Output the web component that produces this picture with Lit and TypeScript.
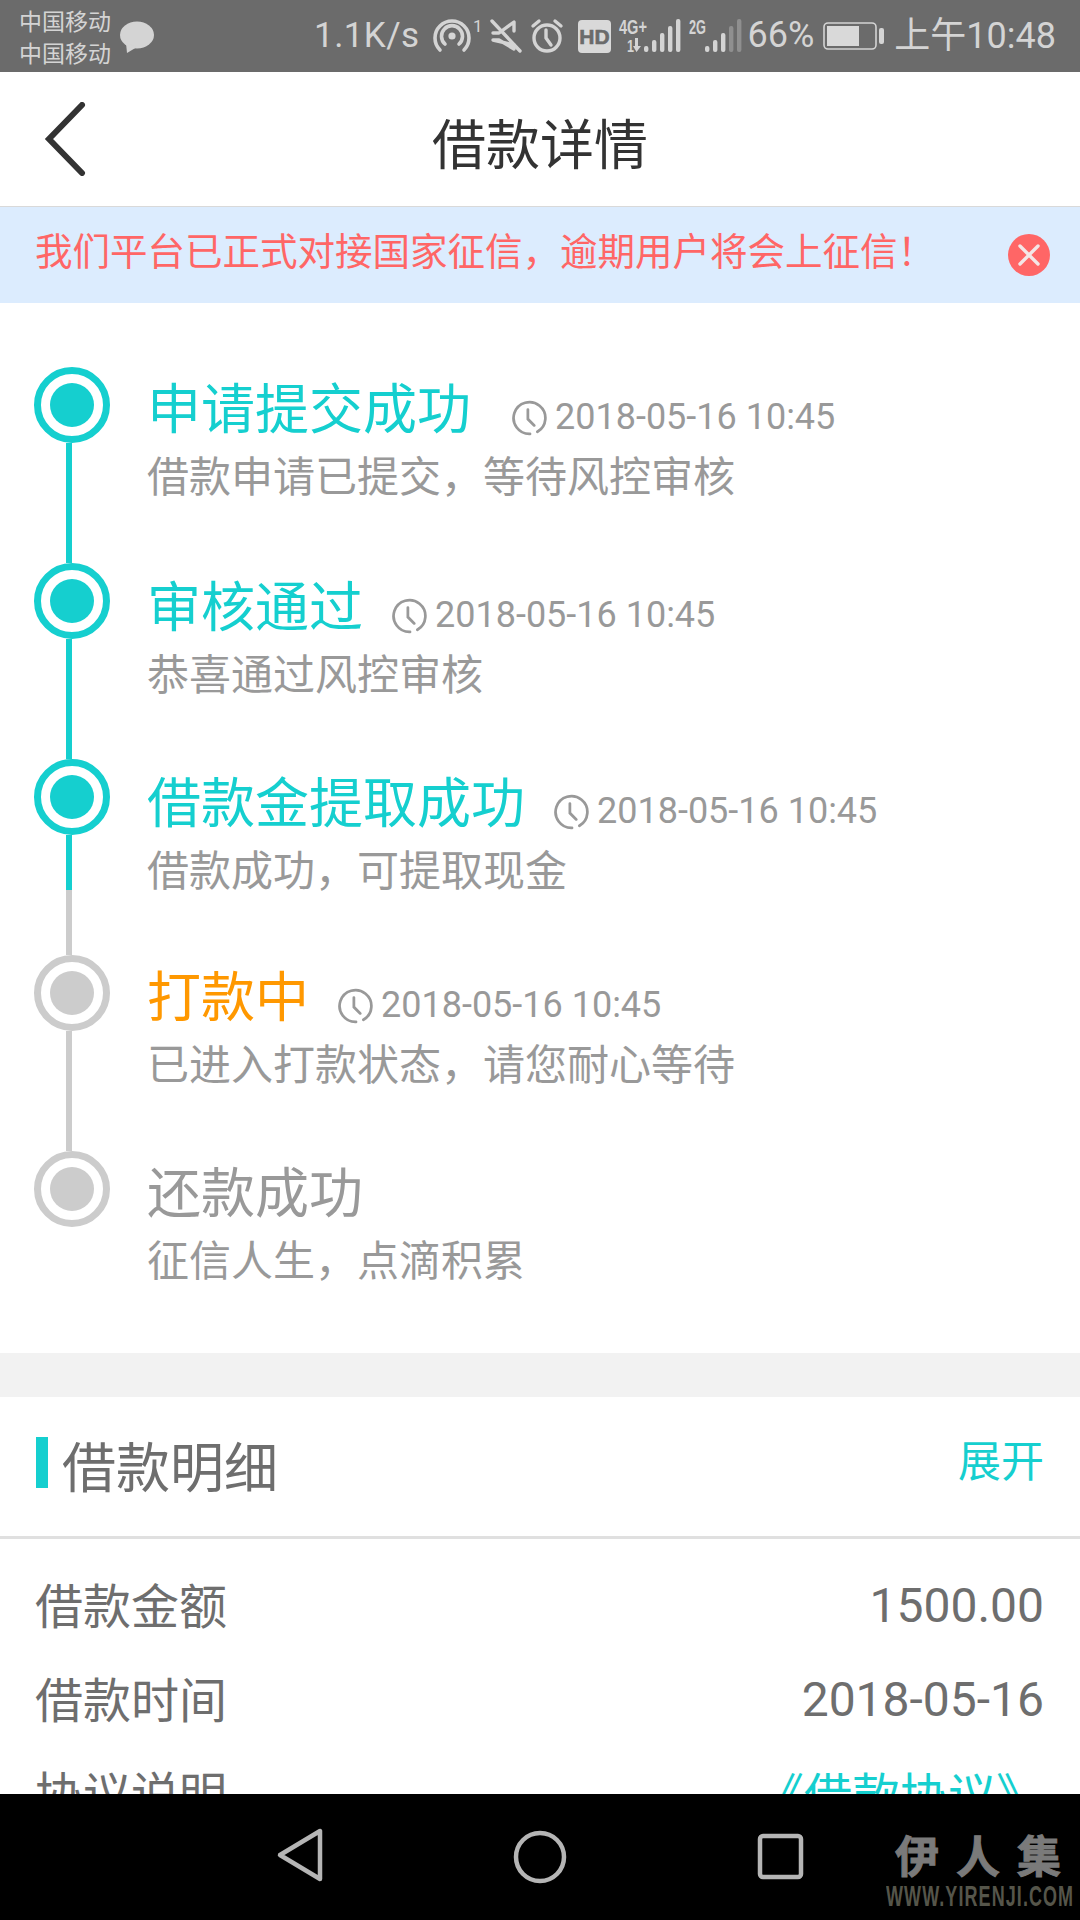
import { LitElement, html, css, svg } from "lit";
import { customElement } from "lit/decorators.js";

type Step = { state: string; title: string; time?: string; sub: string; wide?: boolean; low?: boolean; rail: string };

const STEPS: Step[] = [
  { state: "done", title: "申请提交成功", time: "2018-05-16 10:45", sub: "借款申请已提交，等待风控审核", wide: true, rail: "done" },
  { state: "done", title: "审核通过", time: "2018-05-16 10:45", sub: "恭喜通过风控审核", low: true, rail: "done" },
  { state: "done", title: "借款金提取成功", time: "2018-05-16 10:45", sub: "借款成功，可提取现金", low: true, rail: "split" },
  { state: "active", title: "打款中", time: "2018-05-16 10:45", sub: "已进入打款状态，请您耐心等待", rail: "todo" },
  { state: "todo", title: "还款成功", sub: "征信人生，点滴积累", rail: "none" },
];

const bars = (x0: number, dim: number) =>
  [[46, 0], [40, 1], [33, 2], [26, 3], [19, 4]].map(
    ([top, i]) =>
      svg`<rect x=${x0 + i * 8} y=${top - 19} width="4.4" height=${52 - top} rx="2" fill=${i >= 5 - dim ? "#8f8f8f" : "#d4d4d4"}></rect>`
  );

@customElement("app-root")
export class AppRoot extends LitElement {
  static styles = css`
    :host {
      display: block;
      width: 1080px;
      height: 1920px;
      overflow: hidden;
      background: #fff;
      font-family: "Noto Sans CJK SC", "Noto Sans", sans-serif;
    }
    .page { display: flex; flex-direction: column; height: 1920px; }

    .status {
      flex: none; height: 72px; background: #6b6b6b; color: #d4d4d4;
      display: flex; align-items: center; padding: 0 24px 0 19px; box-sizing: border-box;
    }
    .carrier { font-size: 23px; line-height: 32px; width: 101px; margin-top: 0; }
    .bubble { display: block; margin-top: 2px; }
    .status-right { margin-left: auto; display: flex; align-items: center; font-family: Roboto, sans-serif; }
    .speed { font-size: 35px; line-height: 40px; margin-right: 14px; letter-spacing: .4px; }
    .pct { font-size: 36px; line-height: 40px; margin-left: 7px; margin-top: -2px; }
    .clock-txt { font-size: 36px; line-height: 40px; margin-left: 10px; font-family: Roboto, "Noto Sans CJK SC", sans-serif; }
    .ic { display: block; flex: none; overflow: visible; }
    .m8 { margin-left: 8px; } .m9 { margin-left: 9px; } .m10 { margin-left: 10px; } .m15 { margin-left: 15px; }
    .sb-text { font-family: "Liberation Sans", sans-serif; font-weight: 700; fill: #d4d4d4; }

    .nav {
      flex: none; height: 134px; border-bottom: 1px solid #d9d9d9; position: relative;
      display: flex; align-items: center; justify-content: center;
    }
    .back { position: absolute; left: 44px; top: 30px; }
    .nav-title { font-size: 54px; color: #333; line-height: 60px; margin-top: 6px; }

    .banner {
      flex: none; height: 96px; background: #dcecfe; display: flex; align-items: center;
      justify-content: space-between; padding: 0 30px 0 35px; box-sizing: border-box;
    }
    .banner-text { font-size: 37.5px; line-height: 44px; color: #ff6666; margin-top: -12px; white-space: nowrap; }

    .main { flex: 1; min-height: 0; overflow: hidden; }
    .timeline { padding: 64px 0 0 34px; height: 1050px; box-sizing: border-box; }
    .step { display: flex; height: 196px; }
    .marker { width: 76px; flex: none; display: flex; flex-direction: column; }
    .dot {
      flex: none; width: 76px; height: 76px; box-sizing: border-box; border-radius: 50%;
      border: 7px solid; padding: 9px; position: relative; z-index: 1; background: #fff;
    }
    .dot i { display: block; width: 100%; height: 100%; border-radius: 50%; }
    .done .dot { border-color: #15cfcf; } .done .dot i { background: #15cfcf; }
    .active .dot, .todo .dot { border-color: #cccccc; }
    .active .dot i, .todo .dot i { background: #cccccc; }
    .rail { flex: 1; width: 6px; margin-left: 32px; display: flex; flex-direction: column; }
    .rail i { display: block; }
    .rail .t { background: #15cfcf; }
    .rail .g { background: #cccccc; flex: 1; }
    .rail .t.full { flex: 1; }
    .rail .t.part { height: 55px; }

    .body { margin-left: 37px; padding-top: 9px; }
    .body.low { padding-top: 11px; }
    .head { display: flex; align-items: center; height: 60px; }
    .title { font-size: 54px; line-height: 60px; white-space: nowrap; }
    .done .title { color: #15cfcf; }
    .active .title { color: #ff9800; }
    .todo .title { color: #999; }
    .time { display: flex; align-items: center; color: #999; font: 36px/40px Roboto, sans-serif; margin-left: 29px; padding-top: 21px; }
    .time.wide { margin-left: 41px; }
    .time svg { margin-right: 7px; margin-top: 3px; }
    .sub { font-size: 42px; line-height: 50px; color: #999; margin-top: 13px; white-space: nowrap; }

    .gap { height: 44px; background: #f2f2f2; }
    .sec-head {
      height: 139px; display: flex; align-items: center; padding: 0 36px; border-bottom: 3px solid #e0e0e0;
    }
    .bar { width: 12px; height: 51px; background: #15cfcf; margin-top: -8px; }
    .sec-title { font-size: 54px; color: #6e6e6e; margin-left: 14px; line-height: 60px; margin-top: -4px; }
    .expand { margin-left: auto; font-size: 43px; color: #15cfcf; line-height: 50px; margin-top: -18px; }
    .rows { padding: 19px 36px 0; }
    .row { height: 94px; display: flex; justify-content: space-between; align-items: center; font-size: 48px; color: #6e6e6e; }
    .lbl { margin-top: -4px; margin-left: -1px; }
    .val { font-family: Roboto, sans-serif; }
    .link { color: #15cfcf; font-size: 48px; margin-top: -2px; }

    .bottom {
      flex: none; height: 126px; background: #000; position: relative;
      display: flex; align-items: center; justify-content: center;
    }
    .bottom svg { position: absolute; left: 0; top: 0; }
    .mark { position: absolute; left: 886px; top: 38px; width: 190px; color: #7a7a7a; }
    .mark-cn { font-size: 44px; font-weight: 700; line-height: 44px; letter-spacing: 17px; margin-left: 9px; white-space: nowrap; -webkit-text-stroke: 1px #7a7a7a; }
    .mark-en {
      font: 700 30px/28px "Liberation Sans", sans-serif; color: #55554a;
      letter-spacing: 1.8px; margin-top: 6px; white-space: nowrap;
      width: 315px; transform: scaleX(.6); transform-origin: left center;
    }
  `;

  private statusBar() {
    return html`<div class="status">
      <div class="carrier">中国移动<br />中国移动</div>
      <svg class="ic bubble" width="34" height="32" viewBox="0 0 34 32">
        <ellipse cx="17" cy="14" rx="17" ry="13.5" fill="#d4d4d4"></ellipse>
        <path d="M6 22 L7 32 L17 26Z" fill="#d4d4d4"></path>
      </svg>
      <div class="status-right">
        <span class="speed">1.1K/s</span>
        <svg class="ic" width="48" height="34" viewBox="0 0 48 34" fill="none" stroke="#d4d4d4" stroke-width="3.6" stroke-linecap="round">
          <circle cx="18" cy="17" r="3.6" fill="#d4d4d4" stroke="none"></circle>
          <path d="M11 25a10.500 10.500 0 1 1 14 0"></path>
          <path d="M6 31a17 17 0 1 1 24 0"></path>
          <text x="39" y="13" font-size="17" fill="#d4d4d4" stroke="none" font-family="Roboto">1</text>
        </svg>
        <svg class="ic m8" width="32" height="34" viewBox="0 0 32 34" fill="none" stroke="#d4d4d4" stroke-width="3.4" stroke-linejoin="round" stroke-linecap="round">
          <path d="M2 2 L30 32"></path>
          <path d="M3 14 H9 L24 3 V12 M24 26 V30 L9 21 H3 Z"></path>
        </svg>
        <svg class="ic m9" width="32" height="34" viewBox="0 0 32 34" fill="none" stroke="#d4d4d4" stroke-width="3.4" stroke-linecap="round" stroke-linejoin="round">
          <circle cx="16" cy="19" r="13"></circle>
          <path d="M15 11 V19 L20 26"></path>
          <path d="M2 7 L8 2 M30 7 L24 2"></path>
        </svg>
        <svg class="ic m15" width="33" height="33" viewBox="0 0 33 33">
          <rect width="33" height="33" rx="4" fill="#d9d9d9"></rect>
          <text x="16.5" y="24" font-size="21" text-anchor="middle" fill="#6b6b6b" font-weight="700" font-family="Liberation Sans" stroke="#6b6b6b" stroke-width=".6">HD</text>
        </svg>
        <svg class="ic m8" width="60" height="34" viewBox="0 0 60 34">
          <text class="sb-text" x="0" y="15" font-size="20" textLength="28" lengthAdjust="spacingAndGlyphs">4G+</text>
          <text class="sb-text" x="8" y="33" font-size="17" textLength="7" lengthAdjust="spacingAndGlyphs">1</text>
          <path d="M16 19 H19 V27 H22 L17.500 33 L14 27 H16Z" fill="#d4d4d4"></path>
          <g transform="translate(25 0)">${bars(0, 0)}</g>
        </svg>
        <svg class="ic m10" width="52" height="34" viewBox="0 0 52 34">
          <text class="sb-text" x="0" y="15" font-size="20" textLength="17" lengthAdjust="spacingAndGlyphs">2G</text>
          <g transform="translate(16 0)">${bars(0, 2)}</g>
        </svg>
        <span class="pct">66%</span>
        <svg class="ic m9" width="61" height="28" viewBox="0 0 61 28">
          <rect x="1" y="1" width="52" height="26" rx="4" fill="none" stroke="#d4d4d4" stroke-width="1.600"></rect>
          <rect x="4" y="4" width="32" height="20" fill="#d9d9d9"></rect>
          <rect x="56" y="6" width="5" height="16" rx="2" fill="#d4d4d4"></rect>
        </svg>
        <span class="clock-txt">上午10:48</span>
      </div>
    </div>`;
  }

  private clock() {
    return html`<svg width="36" height="36" viewBox="0 0 34 34" fill="none" stroke="#999" stroke-width="2.600" stroke-linecap="round">
      <path d="M24 30a15 15 0 1 0 -7 2"></path>
      <path d="M15 9 V18 L21 24"></path>
    </svg>`;
  }

  private step(s: Step) {
    const rail =
      s.rail === "done"
        ? html`<div class="rail"><i class="t full"></i></div>`
        : s.rail === "split"
        ? html`<div class="rail"><i class="t part"></i><i class="g"></i></div>`
        : s.rail === "todo"
        ? html`<div class="rail"><i class="g"></i></div>`
        : "";
    return html`<div class="step ${s.state}">
      <div class="marker"><div class="dot"><i></i></div>${rail}</div>
      <div class="body ${s.low ? "low" : ""}">
        <div class="head">
          <div class="title">${s.title}</div>
          ${s.time ? html`<div class="time ${s.wide ? "wide" : ""}">${this.clock()}${s.time}</div>` : ""}
        </div>
        <div class="sub">${s.sub}</div>
      </div>
    </div>`;
  }

  render() {
    return html`<div class="page">
      ${this.statusBar()}
      <div class="nav">
        <svg class="back" width="42" height="74" viewBox="0 0 42 74" fill="none" stroke="#333" stroke-width="6" stroke-linecap="round" stroke-linejoin="miter">
          <path d="M38 3 L5 37 L38 71"></path>
        </svg>
        <div class="nav-title">借款详情</div>
      </div>
      <div class="banner">
        <div class="banner-text">我们平台已正式对接国家征信，逾期用户将会上征信！</div>
        <svg width="42" height="42" viewBox="0 0 42 42">
          <circle cx="21" cy="21" r="21" fill="#ff6666"></circle>
          <path d="M12 12 L30 30 M30 12 L12 30" stroke="#f4e6e6" stroke-width="3.400" stroke-linecap="round"></path>
        </svg>
      </div>
      <div class="main">
        <div class="timeline">${STEPS.map((s) => this.step(s))}</div>
        <div class="gap"></div>
        <div class="sec-head">
          <div class="bar"></div>
          <div class="sec-title">借款明细</div>
          <div class="expand">展开</div>
        </div>
        <div class="rows">
          <div class="row"><span class="lbl">借款金额</span><span class="val">1500.00</span></div>
          <div class="row"><span class="lbl">借款时间</span><span class="val">2018-05-16</span></div>
          <div class="row"><span class="lbl">协议说明</span><span class="link">《借款协议》</span></div>
        </div>
      </div>
      <div class="bottom">
        <svg width="1080" height="126" viewBox="0 0 1080 126" fill="none" stroke="#b5b5b5" stroke-width="4.500" stroke-linejoin="round">
          <path d="M280 61 L320 37 V85 Z"></path>
          <circle cx="540" cy="63" r="24"></circle>
          <rect x="760" y="42" width="41" height="41" rx="3"></rect>
        </svg>
        <div class="mark">
          <div class="mark-cn">伊人集</div>
          <div class="mark-en">WWW.YIRENJI.COM</div>
        </div>
      </div>
    </div>`;
  }
}
